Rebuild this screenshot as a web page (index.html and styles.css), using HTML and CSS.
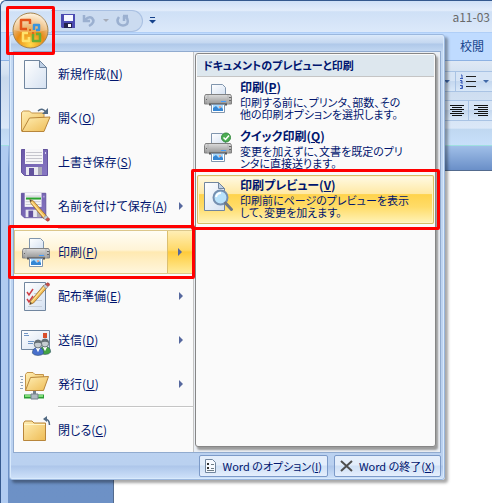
FILE: index.html
```html
<!DOCTYPE html>
<html lang="ja">

<head>
    <meta charset="UTF-8">
    <title>a11-03</title>
    <link rel="stylesheet" href="styles.css">
</head>

<body>

    <svg class="defs" width="0" height="0">
        <defs>
            <linearGradient id="folder" x1="0" y1="0" x2="1" y2="1">
                <stop offset="0" stop-color="#ffeeb4" />
                <stop offset="1" stop-color="#eebc55" />
            </linearGradient>
            <linearGradient id="paper" x1="0" y1="0" x2="1" y2="1">
                <stop offset="0" stop-color="#ffffff" />
                <stop offset="1" stop-color="#d5e1f1" />
            </linearGradient>
            <linearGradient id="disk" x1="0" y1="0" x2="1" y2="1">
                <stop offset="0" stop-color="#6a58a8" />
                <stop offset="1" stop-color="#8878c4" />
            </linearGradient>
            <linearGradient id="metal" x1="0" y1="0" x2="0" y2="1">
                <stop offset="0" stop-color="#dcdcdc" />
                <stop offset="1" stop-color="#959595" />
            </linearGradient>
            <radialGradient id="orb" cx="0.5" cy="0.9" r="0.9">
                <stop offset="0" stop-color="#ffd94a" />
                <stop offset="0.45" stop-color="#e98a13" />
                <stop offset="0.6" stop-color="#e7a450" />
                <stop offset="1" stop-color="#fff3dc" />
            </radialGradient>
        </defs>
        <symbol id="i-printer" viewBox="0 0 32 32">
            <path d="M9.5 13V2.5h11l3 3V13z" fill="url(#paper)" stroke="#8095ad" />
            <path d="M3.500 12.500h25l1 2v7.500h-27v-7.500z" fill="url(#metal)" stroke="#828282" />
            <path d="M6 13v9M26 13v9" stroke="#b5b5b5" />
            <path d="M4 17.500h1M27 15.500h2M27 18.500h2" stroke="#666" />
            <path d="M7 22.500h18" stroke="#555" stroke-width="2" />
            <path d="M9.500 22.500h13v8h-13z" fill="#fff" stroke="#8095ad" />
            <path d="M11 23h10v6H11z" fill="#a9d9fb" />
            <path d="M11 29v-3l3-2 3 3 2-2 2 2v2z" fill="#3586d4" />
            <circle cx="18" cy="25" r="1" fill="#f29a78" />
            <path d="M19 19.500h5" stroke="#459eff" />
        </symbol>
        <symbol id="i-floppy" viewBox="0 0 32 32">
            <path d="M1.500 3.500h26v26h-23l-3-3z" fill="url(#disk)" stroke="#63539d" />
            <path d="M5 3h18v15H5z" fill="#f6f6f8" />
            <path d="M6 6.500h16M6 9.500h16M6 12.500h16M6 15.500h16" stroke="#c5c5cd" />
            <path d="M6 21h16v8H6z" fill="#e9e9f0" />
            <path d="M9 22h5v7H9z" fill="#63539d" />
            <path d="M18 21h4v8h-4z" fill="#aaa9b8" />
            <path d="M25 6h1v2h-1z" fill="#d5cef0" />
        </symbol>
        <symbol id="i-pencil" viewBox="0 0 32 32">
            <path d="M3 2l1.500 5L22 28l4-3.500L8 4z" fill="#f2bd55" stroke="#94672d" />
            <path d="M5 5l18 21" stroke="#ffe8a1" stroke-width="1.500" />
            <path d="M21 26.500l4-3.500 2 2.500-3.500 3.500z" fill="#c8d1da" stroke="#6e7d8a" stroke-width=".7" />
            <path d="M24 29l3.500-3 2 2q0 3-3 3z" fill="#c94c45" stroke="#8d3333" stroke-width=".7" />
            <path d="M3 2l1 3 2-1z" fill="#333" />
        </symbol>
        <symbol id="i-user" viewBox="0 0 14 18">
            <path d="M1 15q0-6 6-6t6 6q-2 2.500-6 2.500T1 15z" fill="currentColor" stroke="#31506e" stroke-width=".6" />
            <path d="M4.500 9L7 14l2.500-5z" fill="#fff" />
            <circle cx="7" cy="5.500" r="4" fill="#c6cdd1" stroke="#667177" />
            <path d="M3 5q0-4 4-4.500 4 .5 4 4.500-4-2-8 0z" fill="#646f75" />
        </symbol>
    </svg>

    <div class="window">
        <header class="titlebar">
            <div class="quick-access">
                <button class="tool" aria-label="上書き保存">
                    <svg width="14" height="14" viewBox="0 0 14 14">
                        <path d="M0 0h14v14H1l-1-1z" fill="#4b4bb2" />
                        <path d="M3 1h9v6H3z" fill="#f6f8ff" />
                        <path d="M3 9h8v5H3z" fill="#23234d" />
                        <path d="M7 10h3v3H7z" fill="#fff" />
                    </svg>
                </button>
                <button class="tool" aria-label="元に戻す">
                    <svg width="14" height="14" viewBox="0 0 14 14">
                        <path d="M2 1v6h6M3 6q4-4 7-2 4 4-3 8" fill="none" stroke="#9bb0d0" stroke-width="2.500" />
                    </svg>
                </button>
                <span class="caret"></span>
                <button class="tool" aria-label="繰り返し">
                    <svg width="14" height="14" viewBox="0 0 14 14">
                        <path d="M3 3q-3 4 0 7 4 3 8 0 2-4-1-7M7 2h5M8 2v5" fill="none" stroke="#9bb0d0" stroke-width="2.500" />
                    </svg>
                </button>
            </div>
            <button class="customize" aria-label="カスタマイズ">
                <svg width="7" height="7" viewBox="0 0 7 7">
                    <path d="M1 0h5v1H1zM0 3h7L3.500 6.500z" fill="#15428b" />
                </svg>
            </button>
            <span class="doc-title">a11-03</span>
        </header>

        <nav class="tabs"><a href="#">校閲</a></nav>

        <div class="ribbon">
            <div class="tool-row">
                <button class="arrow-tool" aria-label="箇条書き"><span class="caret dark"></span></button>
                <button class="list-tool" aria-label="段落番号">
                    <svg width="16" height="15" viewBox="0 0 16 15">
                        <path d="M6 2.500h10M6 7.500h10M6 12.500h10" stroke="#222" />
                        <path d="M1 1h1v3M0 4.500h3M0 6.500h2v1.500H1v1h2M0 11.500h2.500v3H0M1 13h1" fill="none" stroke="#3657b8" />
                    </svg>
                    <span class="caret dark"></span>
                </button>
            </div>
            <div class="tool-row">
                <button class="align-tool" aria-label="中央揃え">
                    <svg width="14" height="12" viewBox="0 0 14 12">
                        <path d="M0 .5h14M2 2.500h10M0 4.500h14M2 6.500h10M0 8.500h14M2 10.500h10" stroke="#111" />
                    </svg>
                </button>
                <button class="align-tool" aria-label="右揃え">
                    <svg width="14" height="12" viewBox="0 0 14 12">
                        <path d="M0 .5h14M4 2.500h10M0 4.500h14M4 6.500h10M0 8.500h14M4 10.500h10" stroke="#111" />
                    </svg>
                </button>
            </div>
        </div>

        <main class="workspace">
            <div class="page"></div>
        </main>
    </div>

    <div class="office-menu">
        <div class="menu-body">
            <div class="commands">
                <button class="command">
                    <svg class="icon" viewBox="0 0 32 32">
                        <path d="M4.500 2.500h15l7 7v21h-22z" fill="url(#paper)" stroke="#71869f" />
                        <path d="M19.500 2.500v7h7z" fill="#bfd0e5" stroke="#71869f" />
                    </svg>
                    <span class="label">新規作成(<u>N</u>)</span>
                </button>
                <button class="command">
                    <svg class="icon" viewBox="0 0 32 32">
                        <path d="M1.500 29V10.500l2-1.500h6l2 2h12.500V28z" fill="url(#folder)" stroke="#c4944b" />
                        <path d="M2 29.500L9.500 16l20.500-1-6 14.500z" fill="url(#folder)" stroke="#b8863b" />
                        <path d="M18 9q4-4 8 1" fill="none" stroke="#526a83" stroke-width="1.500" />
                        <path d="M28 6v6h-6z" fill="#526a83" />
                    </svg>
                    <span class="label">開く(<u>O</u>)</span>
                </button>
                <button class="command">
                    <svg class="icon"><use href="#i-floppy" /></svg>
                    <span class="label">上書き保存(<u>S</u>)</span>
                </button>
                <button class="command">
                    <svg class="icon" viewBox="0 0 32 32">
                        <use href="#i-floppy" width="30" height="30" />
                        <path d="M6 8.500h15" stroke="#2aa42e" stroke-width="2" />
                        <use href="#i-pencil" x="7" y="8" width="25" height="24" />
                    </svg>
                    <span class="label">名前を付けて保存(<u>A</u>)</span>
                    <span class="more"></span>
                </button>
                <hr>
                <button class="command active marked">
                    <svg class="icon"><use href="#i-printer" /></svg>
                    <span class="label">印刷(<u>P</u>)</span>
                    <span class="more"></span>
                </button>
                <button class="command">
                    <svg class="icon" viewBox="0 0 32 32">
                        <path d="M4.500 2.500h21v28h-21z" fill="url(#paper)" stroke="#71869f" />
                        <path d="M7 12l2 3 4-6M7 19l2 3 4-6" fill="none" stroke="#cf3f45" stroke-width="1.500" />
                        <path d="M14 13.500h8M14 20.500h8M8 26.500h14" stroke="#c6ceda" />
                        <use href="#i-pencil" x="7" y="0" width="25" height="24" transform="translate(0 26) scale(1 -1)" />
                    </svg>
                    <span class="label">配布準備(<u>E</u>)</span>
                    <span class="more"></span>
                </button>
                <button class="command">
                    <svg class="icon" viewBox="0 0 32 32">
                        <path d="M1.500 6.500h28v19h-28z" fill="url(#paper)" stroke="#71869f" />
                        <path d="M4 9.500h4M4 11.500h5M8 17.500h6M8 19.500h5" stroke="#7196c6" />
                        <path d="M23 9h4v5h-4z" fill="#d94d2b" />
                        <g color="#43a343"><use href="#i-user" x="18" y="14" width="14" height="17" /></g>
                        <g color="#486fcb"><use href="#i-user" x="11" y="15" width="14" height="17" /></g>
                    </svg>
                    <span class="label">送信(<u>D</u>)</span>
                    <span class="more"></span>
                </button>
                <button class="command">
                    <svg class="icon" viewBox="0 0 32 32">
                        <path d="M0 8.500h3M1 11.500h2M0 14.500h3M1 17.500h2M0 20.500h3" stroke="#91a3b8" />
                        <path d="M5.500 22V6.500L7 4.500h6l2 2h8.500V22z" fill="url(#folder)" stroke="#c4944b" />
                        <path d="M5.500 22.500l5-13 18-1-5 14z" fill="url(#folder)" stroke="#b8863b" />
                        <path d="M14.500 23v5" stroke="#74808c" stroke-width="3" />
                        <path d="M4 28.500h20" stroke="#2c9d36" stroke-width="4" />
                        <path d="M5 28h18" stroke="#7fdd78" stroke-width="2" />
                        <path d="M11 26h7v5h-7z" fill="#aeb9c1" stroke="#74808c" />
                    </svg>
                    <span class="label">発行(<u>U</u>)</span>
                    <span class="more"></span>
                </button>
                <hr>
                <button class="command">
                    <svg class="icon" viewBox="0 0 32 32">
                        <path d="M3.500 26.500V9l1.500-2h7l2 2h11.500v17.500z" fill="url(#folder)" stroke="#b8863b" />
                        <path d="M4 10.500h21" stroke="#fff5c9" />
                        <path d="M29.500 11q0-6-5-6" fill="none" stroke="#526a83" stroke-width="1.500" />
                        <path d="M23 5l4-3v6z" fill="#526a83" />
                    </svg>
                    <span class="label">閉じる(<u>C</u>)</span>
                </button>
            </div>

            <div class="submenu">
                <div class="submenu-panel">
                    <h2>ドキュメントのプレビューと印刷</h2>
                    <button class="option">
                        <svg class="icon"><use href="#i-printer" /></svg>
                        <span class="option-text">
                            <strong>印刷(<u>P</u>)</strong>
                            <span>印刷する前に、プリンタ、部数、その<br>他の印刷オプションを選択します。</span>
                        </span>
                    </button>
                    <button class="option">
                        <svg class="icon" viewBox="0 0 32 32">
                            <use href="#i-printer" />
                            <circle cx="24" cy="6.500" r="4.500" fill="#4cad52" stroke="#358b40" />
                            <path d="M21.500 6.500l2 2 3.500-4" fill="none" stroke="#fff" stroke-width="1.500" />
                        </svg>
                        <span class="option-text">
                            <strong>クイック印刷(<u>Q</u>)</strong>
                            <span>変更を加えずに、文書を既定のプリ<br>ンタに直接送ります。</span>
                        </span>
                    </button>
                    <button class="option active marked">
                        <svg class="icon" viewBox="0 0 32 32">
                            <path d="M2.500 2.500h14l6 6v22h-20z" fill="url(#paper)" stroke="#71869f" />
                            <path d="M16.500 2.500v6h6z" fill="#bfd0e5" stroke="#71869f" />
                            <circle cx="18.500" cy="17.500" r="7" fill="#b9e2fb" stroke="#7590b1" stroke-width="2" />
                            <path d="M14 17q1-4 5-4" fill="none" stroke="#fff" stroke-width="2" />
                            <path d="M23.500 23l6 6.500" stroke="#6e7684" stroke-width="3" stroke-linecap="round" />
                        </svg>
                        <span class="option-text">
                            <strong>印刷プレビュー(<u>V</u>)</strong>
                            <span>印刷前にページのプレビューを表示<br>して、変更を加えます。</span>
                        </span>
                    </button>
                </div>
            </div>
        </div>

        <div class="menu-footer">
            <button class="footer-button">
                <svg width="11" height="14" viewBox="0 0 11 14">
                    <path d="M.5.5h7l3 3v10H.5z" fill="#f7faff" stroke="#71869f" />
                    <path d="M2 4h2v2H2zM2 8h2v2H2z" fill="#333" />
                    <path d="M6 5.500h3M6 9.500h3M2 11.500h7" stroke="#6d7c86" />
                </svg>
                <span>Word のオプション(<u>I</u>)</span>
            </button>
            <button class="footer-button">
                <svg width="13" height="12" viewBox="0 0 13 12">
                    <path d="M1 1l11 10M12 1L1 11" stroke="#4e4e4e" stroke-width="2" />
                </svg>
                <span>Word の終了(<u>X</u>)</span>
            </button>
        </div>
    </div>

    <button class="office-button marked" aria-label="Office ボタン">
        <svg width="37" height="37" viewBox="0 0 37 37">
            <circle cx="18.500" cy="18.500" r="17.500" fill="url(#orb)" stroke="#a3834e" />
            <path d="M2 18Q2 2 18.500 2T35 18Q18 23 2 18z" fill="#fff" opacity=".25" />
            <g fill="none" stroke-width="2.500" stroke-linejoin="round">
                <path d="M15 17H9V8h9v4" stroke="#e4541a" />
                <path d="M22 18v-5h5v5h-3" stroke="#3a94de" />
                <path d="M16 21h-5v8h6v-4" stroke="#ffe26b" />
                <path d="M21 22v7h7v-7h-4" stroke="#69ad35" />
            </g>
            <path d="M17 17h2v2h-2zM20 20h2v2h-2z" fill="#d96a20" />
        </svg>
    </button>

</body>

</html>
```
FILE: styles.css
```css
* {
    box-sizing: border-box;
}

body {
    margin: 0;
    position: relative;
    min-height: 100vh;
    font-family: "Noto Sans CJK JP", sans-serif;
    font-size: 12px;
    line-height: 16px;
    font-feature-settings: "palt";
    color: #00156e;
    white-space: nowrap;
    overflow: hidden;
}

button {
    margin: 0;
    padding: 0;
    border: 0;
    background: none;
    font: inherit;
    font-feature-settings: inherit;
    color: inherit;
    text-align: left;
}

svg {
    flex: none;
    display: block;
}

.defs {
    position: absolute;
}

.icon {
    width: 32px;
    height: 32px;
}

/* window */
.window {
    display: flex;
    flex-direction: column;
    min-height: 100vh;
    border-left: 1px solid #35598f;
    border-top: 1px solid #35598f;
    border-top-left-radius: 6px;
    background: #b0cbf1;
}

.titlebar {
    display: flex;
    align-items: center;
    height: 32px;
    padding: 8px 2px 0 50px;
    border-top-left-radius: 6px;
    background: linear-gradient(#cfe0f7, #e3edfb 30%, #cfe0f6 35%, #dce9fa);
    border-bottom: 1px solid #b0cff7;
}

.quick-access {
    display: flex;
    align-items: center;
    gap: 7px;
    height: 22px;
    padding: 0 12px 0 10px;
    border: 1px solid #a9c0e2;
    border-left: 0;
    border-radius: 0 11px 11px 0;
    background: #cbdbf0;
}

.caret {
    border: 3px solid transparent;
    border-top-color: #a6acb8;
    border-bottom: 0;
}

.caret.dark {
    border-top-color: #4169a8;
}

.customize {
    margin-left: 6px;
}

.doc-title {
    margin-left: auto;
    margin-bottom: 8px;
    color: #696969;
}

.tabs {
    height: 27px;
    padding: 5px 8px;
    text-align: right;
    background: #bfdbff;
}

.tabs a {
    color: #15428b;
    text-decoration: none;
}

.ribbon {
    display: flex;
    flex-direction: column;
    gap: 8px;
    height: 86px;
    padding-top: 10px;
    border-top: 1px solid #8db2e3;
    border-bottom: 1px solid #9fe0e0;
    background: linear-gradient(#dfe9f5, #d3e1f1 15%, #c8d9ed 20%, #dbe8f8 80%, #c0d8f1 81%, #c8e0fa);
}

.tool-row {
    display: flex;
    justify-content: flex-end;
}

.tool-row button {
    display: flex;
    align-items: center;
    justify-content: center;
    gap: 7px;
    height: 21px;
    border: 1px solid #a9c3e4;
    border-right: 0;
    background: linear-gradient(#d6e4f5 45%, #c5d8ef 50%, #d8e7f8);
}

.arrow-tool {
    width: 18px;
}

.list-tool {
    width: 37px;
}

.align-tool {
    width: 24px;
}

.workspace {
    flex: 1;
    margin-left: 7px;
    padding: 24px 0 0 105px;
    display: flex;
    background: linear-gradient(#a0bfe8, #6a8fc8 24px, #6d91c6);
}

.page {
    flex: 1;
    border-left: 1px solid #536b8e;
    border-top: 1px solid #536b8e;
    background: #fff;
}

/* office menu */
.office-menu {
    position: absolute;
    top: 34px;
    left: 9px;
    right: 47px;
    padding: 16px 3px 0;
    border: 1px solid #9bb7dd;
    border-radius: 3px;
    background: linear-gradient(#dce9f9, #c4d7f0 8px, #afc8e9 9px, #c4d9f3 17px, #bad1f0 430px, #adc6ea 431px, #cfe2fa);
    box-shadow: inset 0 0 0 1px #d9eafc, 3px 3px 3px rgba(0, 0, 0, .35);
}

.menu-body {
    display: flex;
    border: 1px solid #91abcf;
    background: #fafafa;
}

.commands {
    flex: 0 0 179px;
    min-width: 0;
}

.commands hr {
    margin: 0 0 0 44px;
    border: 0;
    border-top: 1px solid #c5c5c5;
    border-bottom: 1px solid #fff;
}

.command {
    position: relative;
    display: flex;
    align-items: center;
    gap: 6px;
    width: 100%;
    height: 44px;
    padding-left: 6px;
}

.label {
    flex: 1;
    min-width: 0;
}

.more {
    display: flex;
    flex: none;
    align-items: center;
    justify-content: center;
    width: 25px;
    height: 100%;
}

.more::before {
    content: "";
    border: 4px solid transparent;
    border-left-color: #56689e;
    border-right: 0;
}

.command.active {
    border: 1px solid #dcc78b;
    padding-left: 5px;
    background: linear-gradient(#fffdf5, #fff4d6 45%, #ffe9b1 50%, #fff6dd);
}

.command.active .more {
    border-left: 1px solid #dcc070;
    background: linear-gradient(#ffeeb5, #ffd968 45%, #ffcb3b 50%, #ffec9c);
}

.submenu {
    flex: 1;
    display: flex;
    padding: 1px 4px 5px 1px;
    border-left: 1px solid #c5c5c5;
    background: #ebeff4;
}

.submenu-panel {
    flex: 1;
    padding: 1px;
    border: 1px solid #868686;
    border-radius: 3px;
    background: #fafafa;
    box-shadow: 2px 3px 2px #9b9b9b;
}

.submenu h2 {
    margin: 0;
    padding: 1px 6px 2px;
    border-bottom: 1px solid #c5c5c5;
    background: #dde7ee;
    font-size: 11px;
    line-height: 18px;
}

.option {
    position: relative;
    display: flex;
    gap: 6px;
    width: 100%;
    height: 49px;
    padding: 5px;
}

.option-text {
    font-size: 11px;
    line-height: 12px;
}

.option-text strong {
    display: block;
    font-size: 12px;
    line-height: 14px;
    margin-top: -2px;
    margin-bottom: 2px;
}

.option.active {
    border-radius: 2px;
    background: linear-gradient(#fffbe8, #ffe9a5 38%, #ffd34c 40%, #ffdc68 65%, #fff4bd);
    box-shadow: inset 0 0 0 1px #d6bd66, inset 0 0 0 2px #fff3c6;
}

.menu-footer {
    display: flex;
    justify-content: flex-end;
    gap: 6px;
    padding: 2px 0;
}

.footer-button {
    display: flex;
    align-items: center;
    gap: 6px;
    height: 22px;
    padding: 0 5px;
    border: 1px solid #7c9ac8;
    border-radius: 2px;
    background: linear-gradient(#e4eefb 45%, #cfe0f5 50%, #e5effd);
    font-size: 11px;
}

.office-button {
    position: absolute;
    top: 12px;
    left: 12px;
}

/* red frames over the steps */
.marked::after {
    content: "";
    position: absolute;
    z-index: 1;
    border: 3px solid #f00;
    border-radius: 2px;
}

.command.marked::after {
    inset: -6px -3px -6px -7px;
}

.option.marked::after {
    inset: -6px;
}

.office-button.marked::after {
    inset: -6px;
}
```
